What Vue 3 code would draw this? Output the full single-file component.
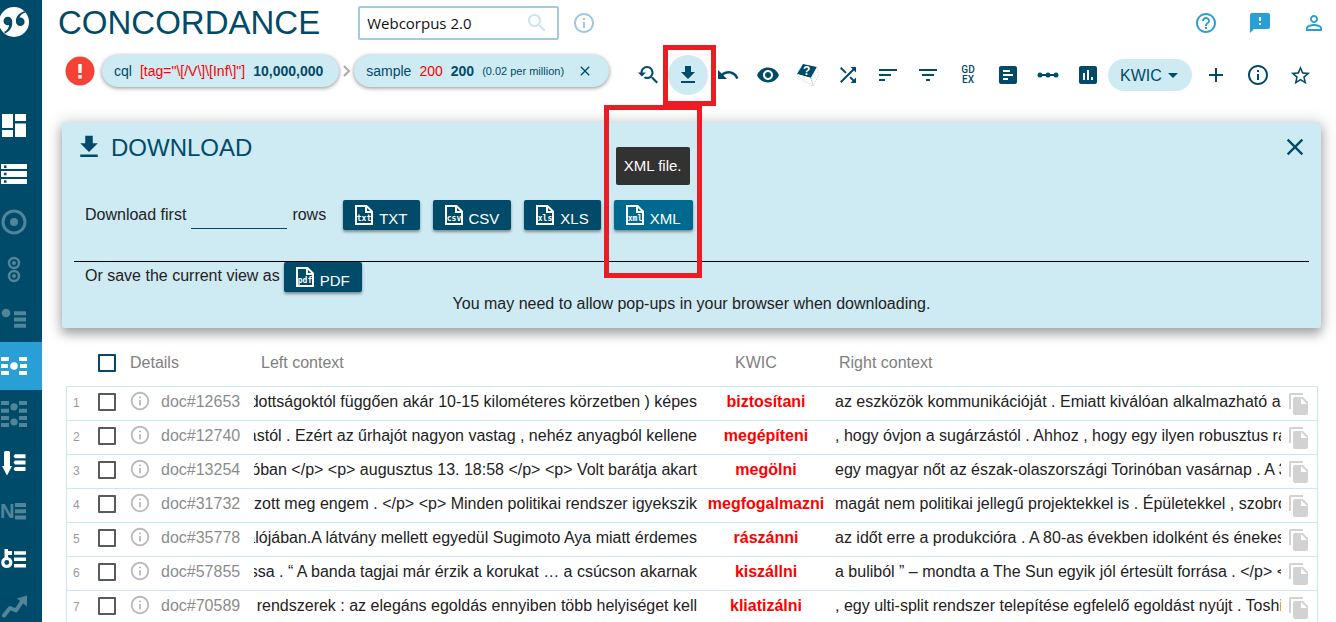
<script setup>
import { ref } from 'vue'

const corpus = ref('Webcorpus 2.0')
const rowLimit = ref('')
const view = ref('KWIC')
const allChecked = ref(false)

const paths = {
  research: 'M17.01 14h-.8l-.27-.27c.98-1.14 1.57-2.61 1.57-4.23 0-3.59-2.91-6.5-6.5-6.5s-6.5 3-6.5 6.5H2l3.84 4 4.16-4H6.51C6.51 7 8.53 5 11.01 5s4.5 2.01 4.5 4.5c0 2.48-2.02 4.5-4.5 4.5-.65 0-1.26-.14-1.82-.38L7.71 15.1c.97.57 2.09.9 3.3.9 1.61 0 3.08-.59 4.22-1.57l.27.27v.79l5.01 4.99L22 19l-4.99-5z',
  download: 'M19 9h-4V3H9v6H5l7 7 7-7zM5 18v2h14v-2H5z',
  undo: 'M12.5 8c-2.65 0-5.05.99-6.9 2.6L2 7v9h9l-3.62-3.62c1.39-1.16 3.16-1.88 5.12-1.88 3.54 0 6.55 2.31 7.6 5.5l2.37-.78C21.08 11.03 17.15 8 12.5 8z',
  eye: 'M12 4.5C7 4.5 2.73 7.61 1 12c1.73 4.39 6 7.5 11 7.5s9.27-3.11 11-7.5c-1.73-4.39-6-7.5-11-7.5zM12 17c-2.76 0-5-2.24-5-5s2.24-5 5-5 5 2.24 5 5-2.24 5-5 5zm0-8c-1.66 0-3 1.34-3 3s1.34 3 3 3 3-1.34 3-3-1.34-3-3-3z',
  shuffle: 'M10.59 9.17L5.41 4 4 5.41l5.17 5.17 1.42-1.41zM14.5 4l2.04 2.04L4 18.59 5.41 20 17.96 7.46 20 9.5V4h-5.5zm.33 9.41l-1.41 1.41 3.13 3.13L14.5 20H20v-5.5l-2.04 2.04-3.13-3.13z',
  sort: 'M3 18h6v-2H3v2zM3 6v2h18V6H3zm0 7h12v-2H3v2z',
  filter: 'M10 18h4v-2h-4v2zM3 6v2h18V6H3zm3 7h12v-2H6v2z',
  frequency: 'M19 3H5c-1.1 0-2 .9-2 2v14c0 1.1.9 2 2 2h14c1.1 0 2-.9 2-2V5c0-1.1-.9-2-2-2zM7 7h7v2H7V7zm0 4h10v2H7v-2zm0 4h5v2H7v-2z',
  chart: 'M19 3H5c-1.1 0-2 .9-2 2v14c0 1.1.9 2 2 2h14c1.1 0 2-.9 2-2V5c0-1.1-.9-2-2-2zM9 17H7v-7h2v7zm4 0h-2V7h2v10zm4 0h-2v-3h2v3z',
  add: 'M19 13h-6v6h-2v-6H5v-2h6V5h2v6h6v2z',
  info: 'M11 17h2v-6h-2v6zm1-15C6.48 2 2 6.48 2 12s4.48 10 10 10 10-4.48 10-10S17.52 2 12 2zm0 18c-4.41 0-8-3.59-8-8s3.59-8 8-8 8 3.59 8 8-3.59 8-8 8zM11 9h2V7h-2v2z',
  star: 'M22 9.24l-7.19-.62L12 2 9.19 8.63 2 9.24l5.46 4.73L5.82 21 12 17.27 18.18 21l-1.63-7.03L22 9.24zM12 15.4l-3.76 2.27 1-4.28-3.32-2.88 4.38-.38L12 6.1l1.71 4.04 4.38.38-3.32 2.88 1 4.28L12 15.4z',
  help: 'M11 18h2v-2h-2v2zm1-16C6.48 2 2 6.48 2 12s4.48 10 10 10 10-4.48 10-10S17.52 2 12 2zm0 18c-4.41 0-8-3.59-8-8s3.59-8 8-8 8 3.59 8 8-3.59 8-8 8zm0-14c-2.21 0-4 1.79-4 4h2c0-1.1.9-2 2-2s2 .9 2 2c0 2-3 1.75-3 5h2c0-2.25 3-2.5 3-5 0-2.21-1.79-4-4-4z',
  feedback: 'M20 2H4c-1.1 0-2 .9-2 2v18l4-4h14c1.1 0 2-.9 2-2V4c0-1.1-.9-2-2-2zm-7 12h-2v-2h2v2zm0-4h-2V6h2v4z',
  person: 'M12 5.9c1.16 0 2.1.94 2.1 2.1s-.94 2.1-2.1 2.1S9.9 9.16 9.9 8s.94-2.1 2.1-2.1m0 9c2.97 0 6.1 1.46 6.1 2.1v1.1H5.9V17c0-.64 3.13-2.1 6.1-2.1M12 4C9.79 4 8 5.79 8 8s1.79 4 4 4 4-1.79 4-4-1.79-4-4-4zm0 9c-2.67 0-8 1.34-8 4v3h16v-3c0-2.66-5.33-4-8-4z',
  search: 'M15.5 14h-.79l-.28-.27C15.41 12.59 16 11.11 16 9.5 16 5.91 13.09 3 9.5 3S3 5.91 3 9.5 5.91 16 9.5 16c1.61 0 3.09-.59 4.23-1.57l.27.28v.79l5 4.99L20.49 19l-4.99-5zm-6 0C7.01 14 5 11.99 5 9.5S7.01 5 9.5 5 14 7.01 14 9.5 11.99 14 9.5 14z',
  close: 'M19 6.41L17.59 5 12 10.59 6.41 5 5 6.41 10.59 12 5 17.59 6.41 19 12 13.41 17.59 19 19 17.59 13.41 12z'
}

const tools = [
  { id: 'research', label: 'Change criteria' },
  { id: 'download', label: 'Download', active: true },
  { id: 'undo', label: 'Undo' },
  { id: 'eye', label: 'View options' },
  { id: 'dice', label: 'Random sample' },
  { id: 'shuffle', label: 'Shuffle' },
  { id: 'sort', label: 'Sort' },
  { id: 'filter', label: 'Filter' },
  { id: 'gdex', label: 'Good examples' },
  { id: 'frequency', label: 'Frequency' },
  { id: 'dots', label: 'Collocations' },
  { id: 'chart', label: 'Distribution' }
]

const topLinks = [
  { id: 'help', label: 'Help' },
  { id: 'feedback', label: 'Feedback' },
  { id: 'person', label: 'Account' }
]

const formats = ['TXT', 'CSV', 'XLS', 'XML']

const navItems = [
  { id: 'dashboard', label: 'Dashboard' },
  { id: 'corpora', label: 'Select corpus' },
  { id: 'sketch', label: 'Word sketch', dim: true },
  { id: 'diff', label: 'Sketch difference', dim: true },
  { id: 'thesaurus', label: 'Thesaurus', dim: true },
  { id: 'concordance', label: 'Concordance', active: true },
  { id: 'parallel', label: 'Parallel concordance', dim: true },
  { id: 'wordlist', label: 'Wordlist' },
  { id: 'ngrams', label: 'N-grams', dim: true },
  { id: 'keywords', label: 'Keywords' },
  { id: 'trends', label: 'Trends', dim: true }
]

const rows = ref([
  { doc: 'doc#12653', left: 'dottságoktól függően akár 10-15 kilométeres körzetben ) képes', kwic: 'biztosítani', right: 'az eszközök kommunikációját . Emiatt kiválóan alkalmazható a', checked: false },
  { doc: 'doc#12740', left: 'ástól . Ezért az űrhajót nagyon vastag , nehéz anyagból kellene', kwic: 'megépíteni', right: ', hogy óvjon a sugárzástól . Ahhoz , hogy egy ilyen robusztus ra', checked: false },
  { doc: 'doc#13254', left: 'óban </p> <p> augusztus 13. 18:58 </p> <p> Volt barátja akart', kwic: 'megölni', right: 'egy magyar nőt az észak-olaszországi Torinóban vasárnap . A 3', checked: false },
  { doc: 'doc#31732', left: 'ízott meg engem . </p> <p> Minden politikai rendszer igyekszik', kwic: 'megfogalmazni', right: 'magát nem politikai jellegű projektekkel is . Épületekkel , szobro', checked: false },
  { doc: 'doc#35778', left: 'alójában.A látvány mellett egyedül Sugimoto Aya miatt érdemes', kwic: 'rászánni', right: 'az időt erre a produkcióra . A 80-as években idolként és énekes', checked: false },
  { doc: 'doc#57855', left: 'ssa . “ A banda tagjai már érzik a korukat … a csúcson akarnak', kwic: 'kiszállni', right: 'a buliból ” – mondta a The Sun egyik jól értesült forrása . </p> <', checked: false },
  { doc: 'doc#70589', left: ': rendszerek : az elegáns egoldás ennyiben több helyiséget kell', kwic: 'kliatizálni', right: ', egy ulti-split rendszer telepítése egfelelő egoldást nyújt . Toshib', checked: false }
])
</script>

<template>
  <div class="page">
    <nav class="sidebar" aria-label="Tools">
      <a class="logo" href="#" aria-label="Home">
        <svg width="30" height="30" viewBox="0 0 30 30">
          <circle cx="14" cy="15" r="15" fill="#fff" />
          <g fill="#004b69">
            <circle cx="7.800" cy="14" r="4.300" />
            <path d="M11.900 13c1.500 6-1.500 11-7 13.500l-.6-1.400c3.700-2.200 5-5 4.700-8z" />
            <circle cx="20.300" cy="14.800" r="4.300" />
            <path d="M16 15.500c-.7-5.500 2.800-9.800 8.600-11.300l.5 1.400c-3.700 1.400-5.600 3.400-5.600 6.400z" />
          </g>
        </svg>
      </a>
      <a
        v-for="item in navItems"
        :key="item.id"
        href="#"
        class="nav-item"
        :class="{ active: item.active, dim: item.dim }"
        :aria-label="item.label"
      >
        <svg width="28" height="28" viewBox="0 0 28 28" fill="#fff">
          <path v-if="item.id === 'dashboard'" d="M2 2h11v14H2zM2 18h11v7H2zM15 2h11v7H15zM15 11.500h11V25H15z" />
          <template v-else-if="item.id === 'corpora'">
            <path d="M1 4h26v5H1zM1 11h26v6H1zM1 19h26v5H1z" />
            <path fill="#004b69" d="M4 5.500h2.500V8H4zM4 12.800h2.500v2.500H4zM4 20.200h2.500v2.500H4z" />
          </template>
          <template v-else-if="item.id === 'sketch'">
            <circle cx="14" cy="14" r="11" fill="none" stroke="#fff" stroke-width="3" />
            <circle cx="14" cy="14" r="4" />
          </template>
          <template v-else-if="item.id === 'diff'">
            <circle cx="14" cy="7" r="5" fill="none" stroke="#fff" stroke-width="2.500" />
            <circle cx="14" cy="7" r="2" />
            <circle cx="14" cy="20" r="5" fill="none" stroke="#fff" stroke-width="2.500" />
            <circle cx="14" cy="20" r="2" />
          </template>
          <template v-else-if="item.id === 'thesaurus'">
            <circle cx="6" cy="9" r="4.300" />
            <path d="M14 7.300h12v4H14zM14 13.500h12v4H14zM14 19.700h12v4H14z" />
          </template>
          <template v-else-if="item.id === 'concordance'">
            <path d="M1 5h8v4H1zM1 12h7v4H1zM1 19h8v4H1zM19 5h8v4h-8zM20 12h7v4h-7zM19 19h8v4h-8z" />
            <circle cx="14" cy="14" r="3.800" />
          </template>
          <template v-else-if="item.id === 'parallel'">
            <path d="M1 1h8v4H1zM1 8.700h8v4H1zM1 16h8v4H1zM1 23h8v4H1zM19 1h8v4h-8zM19 8.700h8v4h-8zM19 16h8v4h-8zM19 23h8v4h-8z" />
            <circle cx="14" cy="6.800" r="3.600" />
            <circle cx="14" cy="22" r="3.600" />
          </template>
          <path v-else-if="item.id === 'wordlist'" d="M4 4.500Q4 3 5.500 3h3Q10 3 10 4.500V18h2L7 27.500 2 18h2zM15 6.300h10.500v4H15l-1.500-2zM15 12.600h10.500v4H15l-1.500-2zM15 19h10.500v4H15l-1.500-2z" />
          <template v-else-if="item.id === 'ngrams'">
            <text x="0" y="22" class="n-letter">N</text>
            <path d="M15 7h11v4H15zM15 13.300h11v4H15zM15 19.500h11v4H15z" />
          </template>
          <template v-else-if="item.id === 'keywords'">
            <circle cx="6.800" cy="18.500" r="4" fill="none" stroke="#fff" stroke-width="3.200" />
            <path d="M4.500 5H8v2h4v4H8v5H4.500zM14 7.300h12v3.500H14zM14 13.500h12v3.500H14zM14 20h12v3.500H14z" />
          </template>
          <template v-else>
            <path d="M4 23.500l6-7.500 6 2.500 6-9" fill="none" stroke="#fff" stroke-width="4" stroke-linejoin="round" stroke-linecap="round" />
            <path d="M27 3.500v11L17 6.500z" />
          </template>
        </svg>
      </a>
    </nav>

    <main class="main">
      <header class="top">
        <h1>CONCORDANCE</h1>
        <div class="corpus">
          <input v-model="corpus" type="text" aria-label="Corpus" />
          <svg width="24" height="24" viewBox="0 0 24 24"><path :d="paths.search" /></svg>
        </div>
        <button class="icon-btn corpus-info" aria-label="Corpus info">
          <svg width="24" height="24" viewBox="0 0 24 24"><path :d="paths.info" /></svg>
        </button>
        <div class="top-links">
          <a v-for="link in topLinks" :key="link.id" href="#" :aria-label="link.label">
            <svg width="24" height="24" viewBox="0 0 24 24"><path :d="paths[link.id]" /></svg>
          </a>
        </div>
      </header>

      <div class="bar">
        <div class="crumbs">
          <svg class="alert" width="30" height="30" viewBox="0 0 30 30">
            <circle cx="15" cy="15" r="14.500" fill="#f44336" />
            <path fill="#fff" d="M13.300 8h3.400v9h-3.400zM13.300 19h3.400v3.400h-3.400z" />
          </svg>
          <div class="pill">
            <span>cql</span>
            <span class="red">[tag="\[/V\]\[Inf\]"]</span>
            <b>10,000,000</b>
          </div>
          <svg class="chevron" width="15" height="16" viewBox="0 0 15 16">
            <path d="M5 3l5 5-5 5" fill="none" stroke="#a9a9a9" stroke-width="2" />
          </svg>
          <div class="pill">
            <span>sample</span>
            <span class="red">200</span>
            <b>200</b>
            <small>(0.02 per million)</small>
            <button class="icon-btn remove" aria-label="Remove sample">
              <svg width="16" height="16" viewBox="0 0 24 24"><path :d="paths.close" /></svg>
            </button>
          </div>
        </div>

        <div class="tools">
          <button v-for="t in tools" :key="t.id" class="icon-btn tool" :class="{ on: t.active }" :aria-label="t.label">
            <span v-if="t.id === 'gdex'" class="gdex">
              <span>GD</span>
              <span>EX</span>
            </span>
            <svg v-else-if="t.id === 'dice'" width="24" height="24" viewBox="0 0 24 24">
              <path d="M7 1l14 3-6 11L1 11z" />
              <path d="M21 4l1.500 9L17 23l-2-8zM1 11l4 5 12 7-2-8" fill="#fff" stroke="#b4c2ca" stroke-width=".7" stroke-dasharray="1.500 1" />
              <text x="7" y="12" class="dice-mark">?</text>
            </svg>
            <svg v-else-if="t.id === 'dots'" width="24" height="24" viewBox="0 0 24 24">
              <path d="M4 11h16v2H4z" />
              <circle cx="4" cy="12" r="2.500" /><circle cx="12" cy="12" r="2.500" /><circle cx="20" cy="12" r="2.500" />
            </svg>
            <svg v-else width="24" height="24" viewBox="0 0 24 24"><path :d="paths[t.id]" /></svg>
            <span v-if="t.active" class="marker marker-tool"></span>
          </button>
          <div class="view">
            <select v-model="view" aria-label="View mode">
              <option>KWIC</option>
              <option>Sentence</option>
            </select>
            <svg width="10" height="5" viewBox="0 0 10 5"><path d="M0 0h10L5 5z" /></svg>
          </div>
          <button class="icon-btn wide" aria-label="Add"><svg width="24" height="24" viewBox="0 0 24 24"><path :d="paths.add" /></svg></button>
          <button class="icon-btn slim" aria-label="Info"><svg width="24" height="24" viewBox="0 0 24 24"><path :d="paths.info" /></svg></button>
          <button class="icon-btn wide" aria-label="Favourite"><svg width="23" height="23" viewBox="0 0 24 24"><path :d="paths.star" /></svg></button>
        </div>
      </div>

      <section class="panel">
        <div class="panel-head">
          <svg width="30" height="30" viewBox="0 0 24 24"><path :d="paths.download" /></svg>
          <h2>DOWNLOAD</h2>
          <button class="icon-btn close" aria-label="Close">
            <svg width="28" height="28" viewBox="0 0 24 24"><path :d="paths.close" /></svg>
          </button>
        </div>
        <div class="rows-line">
          <label for="row-limit">Download first</label>
          <input id="row-limit" v-model="rowLimit" type="text" />
          <span>rows</span>
          <div class="formats">
            <div v-for="f in formats" :key="f" class="format">
              <button class="file-btn" :class="{ hover: f === 'XML' }">
                <svg width="18" height="20" viewBox="0 0 18 20">
                  <path d="M1 1h10.500L17 6.500V19H1zM11 1v6h6" fill="none" stroke="#fff" stroke-width="2" />
                  <text x="9" y="16" class="ext">{{ f.toLowerCase() }}</text>
                </svg>
                <span>{{ f }}</span>
              </button>
              <template v-if="f === 'XML'">
                <span class="tooltip" role="tooltip">XML file.</span>
                <span class="marker marker-file"></span>
              </template>
            </div>
          </div>
        </div>
        <div class="save-line">
          <span>Or save the current view as</span>
          <button class="file-btn">
            <svg width="18" height="20" viewBox="0 0 18 20">
              <path d="M1 1h10.500L17 6.500V19H1zM11 1v6h6" fill="none" stroke="#fff" stroke-width="2" />
              <text x="9" y="16" class="ext">pdf</text>
            </svg>
            <span>PDF</span>
          </button>
        </div>
        <p class="note">You may need to allow pop-ups in your browser when downloading.</p>
      </section>

      <table class="lines">
        <colgroup>
          <col class="c-num" /><col class="c-check" /><col class="c-info" /><col class="c-doc" />
          <col /><col class="c-kwic" /><col /><col class="c-copy" />
        </colgroup>
        <thead>
          <tr>
            <th></th>
            <th><input v-model="allChecked" type="checkbox" class="box all" aria-label="Select all" /></th>
            <th colspan="2" class="h-details">Details</th>
            <th class="h-left">Left context</th>
            <th class="h-kwic">KWIC</th>
            <th class="h-right">Right context</th>
            <th></th>
          </tr>
        </thead>
        <tbody>
          <tr v-for="(r, i) in rows" :key="r.doc">
            <td class="num">{{ i + 1 }}</td>
            <td><input v-model="r.checked" type="checkbox" class="box" :aria-label="'Select line ' + (i + 1)" /></td>
            <td class="info">
              <svg width="22" height="22" viewBox="0 0 24 24"><path :d="paths.info" /></svg>
            </td>
            <td class="doc"><a href="#">{{ r.doc }}</a></td>
            <td class="left"><div><span>{{ r.left }}</span></div></td>
            <td class="kwic">{{ r.kwic }}</td>
            <td class="right"><div>{{ r.right }}</div></td>
            <td class="copy">
              <button class="icon-btn" :aria-label="'Copy line ' + (i + 1)">
                <svg width="20" height="22" viewBox="0 0 20 22">
                  <path d="M2 0h12v2H2v14H0V2Q0 0 2 0z" />
                  <path d="M6 4h8l5 5v11q0 2-2 2H6q-2 0-2-2V6q0-2 2-2zM12 5v6h6z" fill-rule="evenodd" />
                </svg>
              </button>
            </td>
          </tr>
        </tbody>
      </table>
    </main>
  </div>
</template>

<style>
body {
  background: #fff;
}
</style>

<style scoped>
.page {
  display: flex;
  height: 100vh;
  overflow: hidden;
  font-family: "Liberation Sans", Arial, sans-serif;
  font-size: 16px;
  line-height: 20px;
  color: #222;
}
.page * {
  box-sizing: border-box;
}
svg {
  display: block;
  flex: none;
}
.sidebar {
  flex: none;
  width: 42px;
  background: #004b69;
}
.logo {
  display: block;
  height: 102px;
  padding-top: 7px;
}
.nav-item {
  display: flex;
  align-items: center;
  height: 48px;
}
.nav-item.active {
  background: #2a9fd6;
}
.nav-item.dim svg {
  opacity: 0.32;
}
.n-letter {
  font: bold 20px "Liberation Sans", Arial, sans-serif;
}
.main {
  flex: 1;
  min-width: 0;
}
.icon-btn {
  display: flex;
  align-items: center;
  justify-content: center;
  padding: 0;
  border: 0;
  background: none;
  color: #004b69;
  fill: #004b69;
  cursor: pointer;
}
.top {
  display: flex;
  align-items: center;
  height: 45px;
  padding: 0 10px 0 16px;
}
h1 {
  margin: 0;
  font-size: 33px;
  line-height: 44px;
  font-weight: 400;
  color: #004b69;
}
.corpus {
  display: flex;
  align-items: center;
  width: 201px;
  height: 34px;
  margin-left: 38px;
  padding-right: 8px;
  border: 2px solid #a3cbdf;
  border-radius: 2px;
}
.corpus input {
  flex: 1;
  min-width: 0;
  padding: 0 0 0 7px;
  border: 0;
  outline: 0;
  background: none;
  font: 15px "Open Sans", "Noto Sans", sans-serif;
  color: #111;
}
.corpus svg {
  fill: #cde4ee;
}
.corpus-info {
  margin-left: 13px;
  fill: #9dc8dd;
}
.top-links {
  display: flex;
  gap: 30px;
  margin-left: auto;
  fill: #2a9fd6;
}
.bar {
  display: flex;
  align-items: flex-start;
  margin-top: 10px;
  height: 40px;
  padding: 0 12px 0 23px;
}
.crumbs {
  display: flex;
  align-items: center;
}
.alert {
  margin-right: 7px;
}
.pill {
  display: flex;
  align-items: center;
  gap: 8px;
  height: 32px;
  padding: 0 16px 0 12px;
  border-radius: 16px;
  background: #ceeaf3;
  box-shadow: 0 1px 4px rgba(0, 0, 0, 0.45);
  font-size: 14px;
  color: #004b69;
  white-space: nowrap;
}
.pill small {
  font-size: 11px;
}
.red {
  color: #f00;
}
.remove {
  margin-left: 5px;
}
.tools {
  display: flex;
  align-items: center;
  height: 40px;
  margin-left: auto;
}
.tool {
  position: relative;
  width: 40px;
  height: 40px;
  border-radius: 50%;
}
.tool.on {
  background: #ceeaf3;
}
.gdex {
  display: grid;
  font: 500 10px/10px Roboto, sans-serif;
}
.dice-mark {
  font: bold 12px "Liberation Sans", Arial, sans-serif;
  fill: #fff;
}
.marker {
  position: absolute;
  z-index: 3;
  border: 5px solid #ed1c24;
  pointer-events: none;
}
.marker-tool {
  inset: -10px -8px -11px -5px;
}
.view {
  position: relative;
  color: #004b69;
}
.view select {
  appearance: none;
  width: 84px;
  height: 32px;
  padding: 0 0 0 12px;
  border: 0;
  border-radius: 16px;
  background: #ceeaf3;
  font: 16px "Liberation Sans", Arial, sans-serif;
  color: #004b69;
}
.view svg {
  position: absolute;
  right: 14px;
  top: 14px;
  fill: #004b69;
  pointer-events: none;
}
.wide {
  width: 48px;
}
.slim {
  width: 36px;
}
.panel {
  margin: 27px 15px 0 20px;
  padding: 0 12px 14px;
  border-radius: 3px;
  background: #ceeaf3;
  box-shadow: 0 6px 10px rgba(0, 0, 0, 0.24), 0 2px 16px 2px rgba(0, 0, 0, 0.2);
}
.panel-head {
  display: flex;
  align-items: center;
  height: 50px;
  fill: #004b69;
}
.panel-head h2 {
  margin: 2px 0 0 7px;
  font-size: 24px;
  line-height: 30px;
  font-weight: 400;
  color: #004b69;
}
.close {
  margin-left: auto;
}
.rows-line {
  display: flex;
  align-items: center;
  padding: 28px 0 31px 11px;
  border-bottom: 1px solid #000;
}
.rows-line input {
  width: 96px;
  height: 28px;
  margin: 0 5px;
  padding: 0;
  border: 0;
  border-bottom: 1px solid #004b69;
  outline: 0;
  background: none;
  font: inherit;
}
.formats {
  display: flex;
  gap: 13px;
  margin-left: 17px;
}
.format {
  position: relative;
}
.file-btn {
  display: flex;
  align-items: center;
  gap: 6px;
  height: 30px;
  padding: 0 12px;
  border: 0;
  border-radius: 2px;
  background: #004b69;
  box-shadow: 0 2px 3px rgba(0, 0, 0, 0.4);
  font: 15px "Liberation Sans", Arial, sans-serif;
  color: #fff;
}
.file-btn span {
  padding-top: 6px;
}
.file-btn.hover {
  background: #006990;
}
.ext {
  font: bold 8px "DejaVu Sans Mono", monospace;
  fill: #fff;
  text-anchor: middle;
}
.tooltip {
  position: absolute;
  left: 2px;
  top: -53px;
  padding: 9px 8px;
  border-radius: 2px;
  background: #323232;
  font-size: 15px;
  color: #fff;
  white-space: nowrap;
}
.marker-file {
  inset: -95px -9px -48px -10px;
}
.save-line {
  display: flex;
  align-items: center;
  gap: 4px;
  padding-left: 11px;
}
.save-line > span {
  padding-bottom: 2px;
}
.note {
  margin: 2px 0 0;
  text-align: center;
}
.lines {
  width: calc(100% - 42px);
  margin: 11px 18px 0 24px;
  table-layout: fixed;
  border-collapse: separate;
  border-spacing: 0;
}
.c-num {
  width: 24px;
}
.c-check {
  width: 35px;
}
.c-info {
  width: 30px;
}
.c-doc {
  width: 96px;
}
.c-kwic {
  width: 138px;
}
.c-copy {
  width: 37px;
}
th {
  height: 47px;
  padding: 0;
  font-weight: 400;
  text-align: left;
  color: #808080;
}
th.h-details {
  padding-left: 5px;
}
th.h-left {
  padding-left: 10px;
}
th.h-kwic {
  padding-left: 38px;
}
th.h-right {
  padding-left: 4px;
}
td {
  height: 34px;
  padding: 0 0 3px;
  border-top: 1px solid #c9e8f2;
  white-space: nowrap;
}
td.num {
  padding: 0 0 2px 6px;
  border-left: 1px solid #c9e8f2;
  font-size: 12px;
  color: #999;
}
td.copy {
  padding: 0 0 0 8px;
  border-right: 1px solid #c9e8f2;
}
.box {
  appearance: none;
  display: block;
  width: 18px;
  height: 18px;
  margin: 0 0 0 8px;
  border: 2px solid #5a5a5a;
  border-radius: 1px;
}
.box.all {
  border-color: #004b69;
}
td.info {
  padding: 0 0 5px 4px;
  fill: #bbb;
}
.doc a {
  padding-left: 6px;
  color: #8c8c8c;
  text-decoration: none;
}
.left div {
  display: flex;
  justify-content: flex-end;
  margin-left: 3px;
  overflow: hidden;
}
.kwic {
  text-align: center;
  font-weight: 700;
  color: #f00;
}
.right div {
  overflow: hidden;
}
.copy .icon-btn {
  fill: #d2d2d2;
}
</style>
